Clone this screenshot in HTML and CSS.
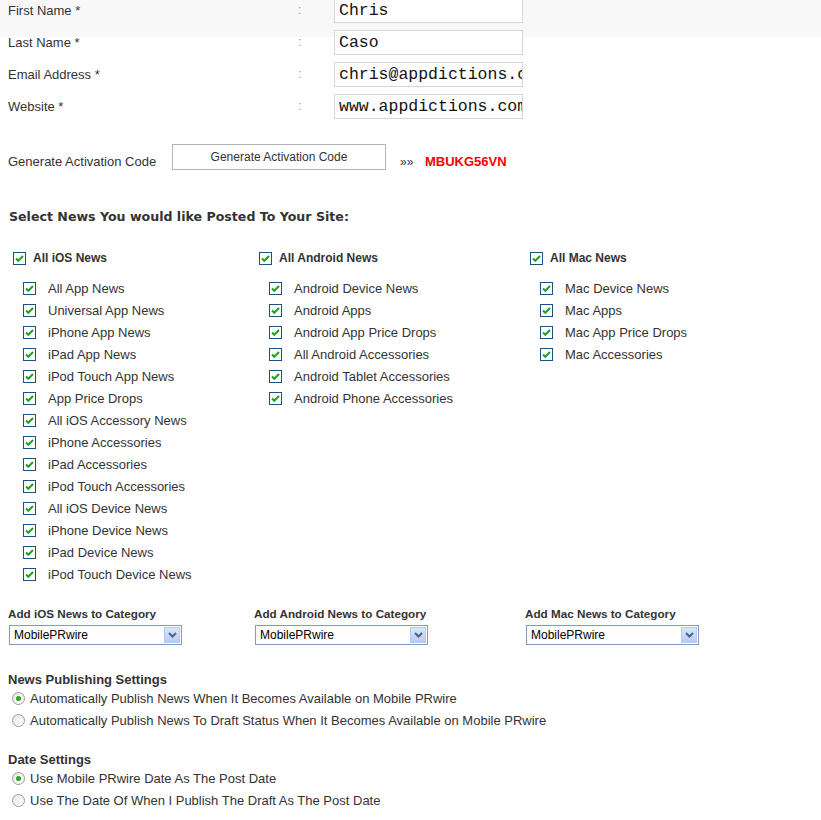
FILE: index.html
```html
<!DOCTYPE html>
<html>
<head>
<meta charset="utf-8">
<link rel="stylesheet" href="styles.css">
</head>
<body>
<div class="page">
  <div class="fields">
    <div class="field-row">
      <span class="field-label">First Name *</span><span class="colon">:</span><span class="text-input">Chris</span>
    </div>
    <div class="field-row">
      <span class="field-label">Last Name *</span><span class="colon">:</span><span class="text-input">Caso</span>
    </div>
    <div class="field-row">
      <span class="field-label">Email Address *</span><span class="colon">:</span><span class="text-input">chris@appdictions.com</span>
    </div>
    <div class="field-row">
      <span class="field-label">Website *</span><span class="colon">:</span><span class="text-input">www.appdictions.com</span>
    </div>
  </div>

  <div class="activation">
    <span class="act-label">Generate Activation Code</span>
    <span class="act-button">Generate Activation Code</span>
    <span class="raquo">&raquo;&raquo;</span>
    <span class="act-code">MBUKG56VN</span>
  </div>

  <h2 class="section-title">Select News You would like Posted To Your Site:</h2>

  <div class="news-cols">
    <div class="news-col col-ios">
      <div class="group-head"><span class="cb"><svg viewBox="0 0 11 11"><path d="M2 5.5 L4.3 7.8 L9 3" /></svg></span>All iOS News</div>
      <ul class="items">
        <li><span class="cb"><svg viewBox="0 0 11 11"><path d="M2 5.5 L4.3 7.8 L9 3" /></svg></span>All App News</li>
        <li><span class="cb"><svg viewBox="0 0 11 11"><path d="M2 5.5 L4.3 7.8 L9 3" /></svg></span>Universal App News</li>
        <li><span class="cb"><svg viewBox="0 0 11 11"><path d="M2 5.5 L4.3 7.8 L9 3" /></svg></span>iPhone App News</li>
        <li><span class="cb"><svg viewBox="0 0 11 11"><path d="M2 5.5 L4.3 7.8 L9 3" /></svg></span>iPad App News</li>
        <li><span class="cb"><svg viewBox="0 0 11 11"><path d="M2 5.5 L4.3 7.8 L9 3" /></svg></span>iPod Touch App News</li>
        <li><span class="cb"><svg viewBox="0 0 11 11"><path d="M2 5.5 L4.3 7.8 L9 3" /></svg></span>App Price Drops</li>
        <li><span class="cb"><svg viewBox="0 0 11 11"><path d="M2 5.5 L4.3 7.8 L9 3" /></svg></span>All iOS Accessory News</li>
        <li><span class="cb"><svg viewBox="0 0 11 11"><path d="M2 5.5 L4.3 7.8 L9 3" /></svg></span>iPhone Accessories</li>
        <li><span class="cb"><svg viewBox="0 0 11 11"><path d="M2 5.5 L4.3 7.8 L9 3" /></svg></span>iPad Accessories</li>
        <li><span class="cb"><svg viewBox="0 0 11 11"><path d="M2 5.5 L4.3 7.8 L9 3" /></svg></span>iPod Touch Accessories</li>
        <li><span class="cb"><svg viewBox="0 0 11 11"><path d="M2 5.5 L4.3 7.8 L9 3" /></svg></span>All iOS Device News</li>
        <li><span class="cb"><svg viewBox="0 0 11 11"><path d="M2 5.5 L4.3 7.8 L9 3" /></svg></span>iPhone Device News</li>
        <li><span class="cb"><svg viewBox="0 0 11 11"><path d="M2 5.5 L4.3 7.8 L9 3" /></svg></span>iPad Device News</li>
        <li><span class="cb"><svg viewBox="0 0 11 11"><path d="M2 5.5 L4.3 7.8 L9 3" /></svg></span>iPod Touch Device News</li>
      </ul>
    </div>
    <div class="news-col col-android">
      <div class="group-head"><span class="cb"><svg viewBox="0 0 11 11"><path d="M2 5.5 L4.3 7.8 L9 3" /></svg></span>All Android News</div>
      <ul class="items">
        <li><span class="cb"><svg viewBox="0 0 11 11"><path d="M2 5.5 L4.3 7.8 L9 3" /></svg></span>Android Device News</li>
        <li><span class="cb"><svg viewBox="0 0 11 11"><path d="M2 5.5 L4.3 7.8 L9 3" /></svg></span>Android Apps</li>
        <li><span class="cb"><svg viewBox="0 0 11 11"><path d="M2 5.5 L4.3 7.8 L9 3" /></svg></span>Android App Price Drops</li>
        <li><span class="cb"><svg viewBox="0 0 11 11"><path d="M2 5.5 L4.3 7.8 L9 3" /></svg></span>All Android Accessories</li>
        <li><span class="cb"><svg viewBox="0 0 11 11"><path d="M2 5.5 L4.3 7.8 L9 3" /></svg></span>Android Tablet Accessories</li>
        <li><span class="cb"><svg viewBox="0 0 11 11"><path d="M2 5.5 L4.3 7.8 L9 3" /></svg></span>Android Phone Accessories</li>
      </ul>
    </div>
    <div class="news-col col-mac">
      <div class="group-head"><span class="cb"><svg viewBox="0 0 11 11"><path d="M2 5.5 L4.3 7.8 L9 3" /></svg></span>All Mac News</div>
      <ul class="items">
        <li><span class="cb"><svg viewBox="0 0 11 11"><path d="M2 5.5 L4.3 7.8 L9 3" /></svg></span>Mac Device News</li>
        <li><span class="cb"><svg viewBox="0 0 11 11"><path d="M2 5.5 L4.3 7.8 L9 3" /></svg></span>Mac Apps</li>
        <li><span class="cb"><svg viewBox="0 0 11 11"><path d="M2 5.5 L4.3 7.8 L9 3" /></svg></span>Mac App Price Drops</li>
        <li><span class="cb"><svg viewBox="0 0 11 11"><path d="M2 5.5 L4.3 7.8 L9 3" /></svg></span>Mac Accessories</li>
      </ul>
    </div>
  </div>

  <div class="cat-cols">
    <div class="cat col-ios">
      <div class="cat-label">Add iOS News to Category</div>
      <div class="select"><span class="select-text">MobilePRwire</span><span class="select-btn"><svg viewBox="0 0 9 6"><path d="M1 1 L4.5 4.5 L8 1" /></svg></span></div>
    </div>
    <div class="cat col-android">
      <div class="cat-label">Add Android News to Category</div>
      <div class="select"><span class="select-text">MobilePRwire</span><span class="select-btn"><svg viewBox="0 0 9 6"><path d="M1 1 L4.5 4.5 L8 1" /></svg></span></div>
    </div>
    <div class="cat col-mac">
      <div class="cat-label">Add Mac News to Category</div>
      <div class="select"><span class="select-text">MobilePRwire</span><span class="select-btn"><svg viewBox="0 0 9 6"><path d="M1 1 L4.5 4.5 L8 1" /></svg></span></div>
    </div>
  </div>

  <div class="setting">
    <div class="setting-title">News Publishing Settings</div>
    <div class="radio-row"><span class="radio checked"></span>Automatically Publish News When It Becomes Available on Mobile PRwire</div>
    <div class="radio-row"><span class="radio"></span>Automatically Publish News To Draft Status When It Becomes Available on Mobile PRwire</div>
  </div>

  <div class="setting">
    <div class="setting-title">Date Settings</div>
    <div class="radio-row"><span class="radio checked"></span>Use Mobile PRwire Date As The Post Date</div>
    <div class="radio-row"><span class="radio"></span>Use The Date Of When I Publish The Draft As The Post Date</div>
  </div>
</div>
</body>
</html>
```

FILE: styles.css
```css
* { box-sizing: border-box; }
html, body { margin: 0; padding: 0; }
body {
  font-family: "Liberation Sans", Arial, sans-serif;
  font-size: 13px;
  color: #333;
  background: linear-gradient(#f8f8f8 0, #f8f8f8 37px, #fff 37px) no-repeat;
  background-size: 821px 37px;
  background-color: #fff;
}
.page { width: 821px; }

.fields { margin-top: -6px; }
.field-row {
  display: flex;
  align-items: center;
  height: 32px;
}
.field-label { width: 298px; padding-left: 8px; }
.colon { width: 36px; color: #999; font-size: 12px; }
.text-input {
  width: 189px;
  height: 25px;
  border: 1px solid #d6d6d6;
  background: #fff;
  font-family: "Liberation Mono", "Courier New", monospace;
  font-size: 16.5px;
  line-height: 18px;
  padding: 3px 0 0 4px;
  white-space: nowrap;
  overflow: hidden;
  color: #111;
}

.activation {
  display: flex;
  margin-top: 22px;
  height: 26px;
  padding-left: 8px;
}
.act-label { width: 164px; padding-top: 10px; }
.act-button {
  width: 214px;
  height: 26px;
  border: 1px solid #b5b5b5;
  text-align: center;
  padding-top: 5px;
  font-size: 12px;
}
.raquo { margin-left: 14px; padding-top: 11px; width: 25px; font-size: 12px; }
.act-code { color: #f00; font-weight: bold; padding-top: 10px; }

.section-title {
  font-family: "DejaVu Sans", Verdana, sans-serif;
  font-size: 12.6px;
  font-weight: bold;
  margin: 39px 0 0 9px;
  color: #333;
}

.news-cols {
  display: flex;
  margin-top: 27px;
  padding-left: 13px;
}
.news-col.col-ios { width: 246px; }
.news-col.col-android { width: 271px; }
.group-head {
  display: flex;
  align-items: center;
  font-weight: bold;
  font-size: 12px;
  height: 14px;
}
.group-head .cb { margin-right: 7px; }
.items {
  list-style: none;
  margin: 12px 0 0 10px;
  padding: 0;
}
.items li {
  display: flex;
  align-items: center;
  height: 22px;
}
.items .cb { margin-right: 12px; }
.cb {
  width: 13px;
  height: 13px;
  border: 1px solid #1c5180;
  background: #fff;
  display: inline-flex;
  align-items: center;
  justify-content: center;
  flex: none;
}
.cb svg { width: 11px; height: 11px; display: block; }
.cb path { fill: none; stroke: #21a121; stroke-width: 2; }

.cat-cols {
  display: flex;
  margin-top: 22px;
  padding-left: 8px;
}
.cat.col-ios { width: 246px; }
.cat.col-android { width: 271px; }
.cat-label { font-weight: bold; font-size: 11.7px; line-height: 14px; }
.select {
  margin-top: 4px;
  margin-left: 1px;
  width: 173px;
  height: 20px;
  border: 1px solid #7f9db9;
  display: flex;
  align-items: center;
  justify-content: space-between;
  background: #fff;
  padding: 1px;
  font-size: 12px;
}
.select-text { padding-left: 3px; color: #000; }
.select-btn {
  width: 16px;
  height: 16px;
  border: 1px solid #b7c9ef;
  background: linear-gradient(#dbe6fc, #b9cbf3);
  display: flex;
  align-items: center;
  justify-content: center;
}
.select-btn svg { width: 9px; height: 6px; }
.select-btn path { fill: none; stroke: #4d6185; stroke-width: 2; }

.setting { padding-left: 8px; margin-top: 28px; }
.setting + .setting { margin-top: 22px; }
.setting-title { font-weight: bold; line-height: 14px; }
.radio-row {
  display: flex;
  align-items: center;
  height: 22px;
  padding-left: 4px;
}
.radio {
  width: 13px;
  height: 13px;
  border-radius: 50%;
  border: 1px solid #9a9a9a;
  background: linear-gradient(135deg, #e5e5e5, #fff);
  margin-right: 5px;
  display: inline-flex;
  align-items: center;
  justify-content: center;
  flex: none;
}
.radio.checked::after {
  content: "";
  width: 5px;
  height: 5px;
  border-radius: 50%;
  background: #2ca52c;
}
```
